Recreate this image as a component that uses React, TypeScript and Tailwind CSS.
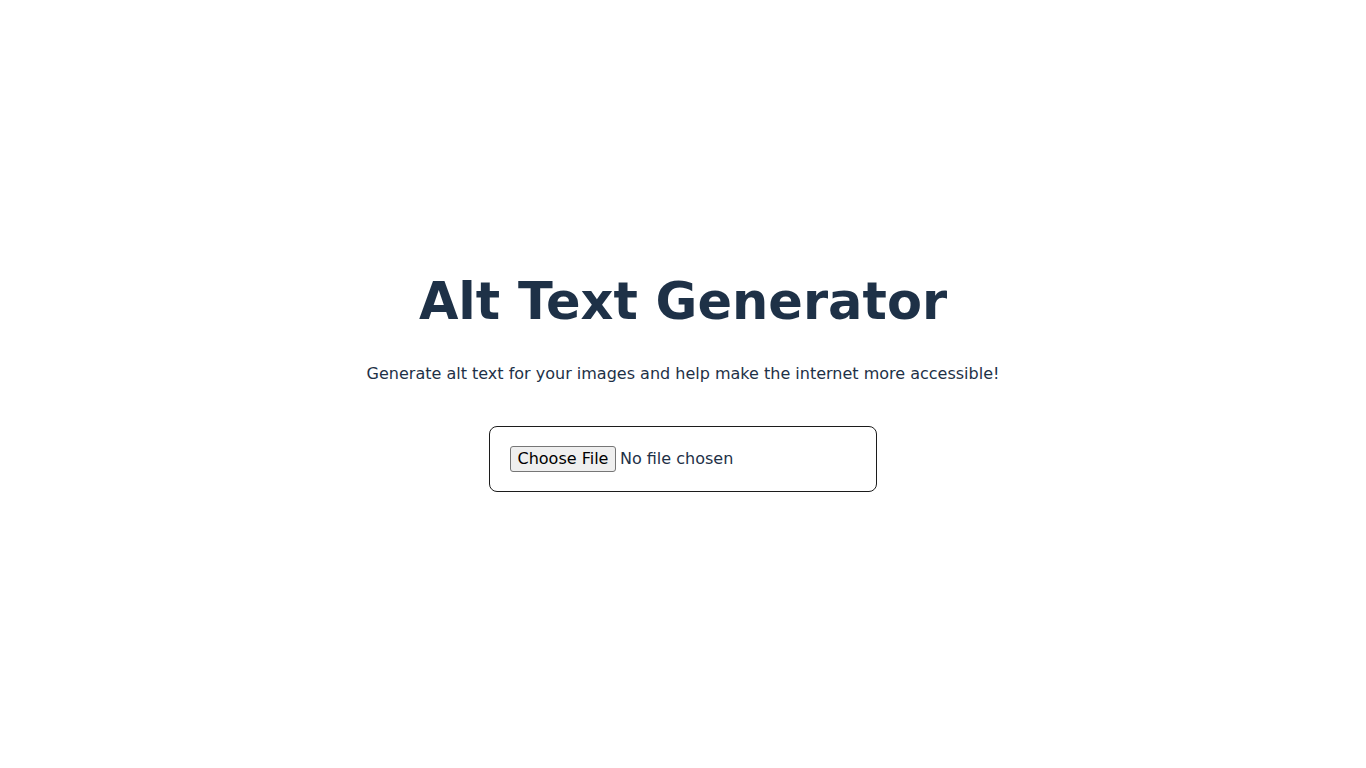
export default function App() {
  return (
    <main className="flex min-h-screen flex-col items-center justify-center bg-white pb-1.5 font-['DejaVu_Sans',sans-serif] text-[#1e3147]">
      <h1 className="text-[51px] font-bold leading-tight">Alt Text Generator</h1>
      <p className="mt-7 text-base">
        Generate alt text for your images and help make the internet more accessible!
      </p>
      <div className="mt-10 w-[388px] rounded-lg border border-[#1c1c1c] px-5 py-[19px]">
        <input
          type="file"
          accept="image/*"
          className="block text-base leading-5 file:mr-1 file:rounded-[3px] file:border file:border-solid file:border-[#767676] file:bg-[#efefef] file:px-[6.5px] file:py-[2px] file:text-black"
        />
      </div>
    </main>
  )
}
